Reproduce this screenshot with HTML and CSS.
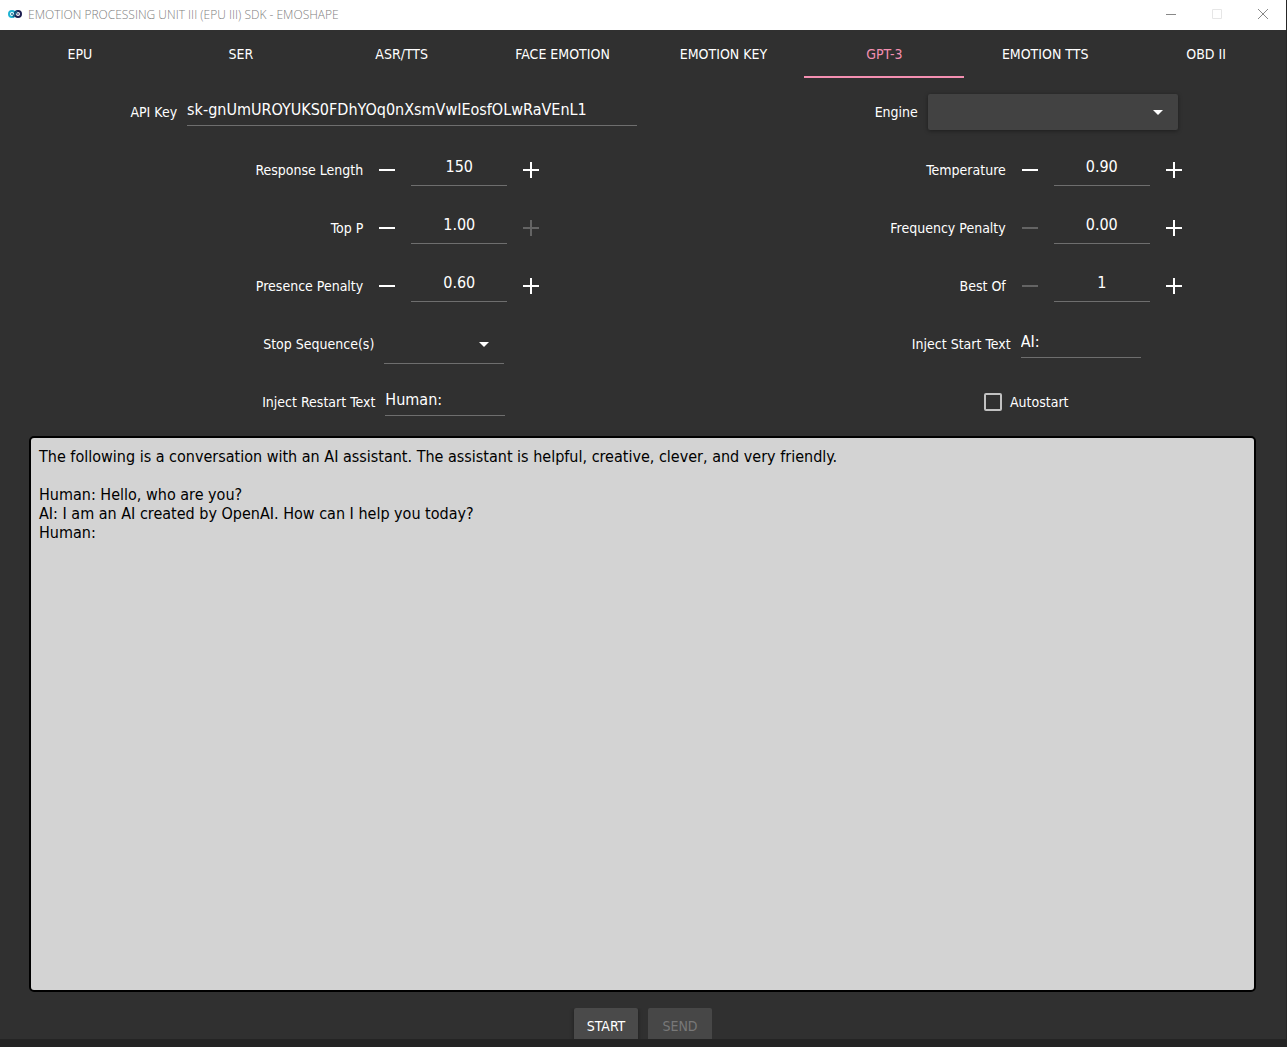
FILE: index.html
```html
<!DOCTYPE html>
<html lang="en">
<head>
    <meta charset="UTF-8">
    <meta name="viewport" content="width=device-width, initial-scale=1.0">
    <title>EMOTION PROCESSING UNIT III (EPU III) SDK - EMOSHAPE</title>
    <link rel="stylesheet" href="styles.css">
</head>
<body>

    <header class="titlebar">
        <svg class="logo" width="14" height="10" viewBox="0 0 14 10" fill="none" stroke-width="2">
            <circle cx="4" cy="5" r="3" stroke="#1fb3d3"/>
            <circle cx="10" cy="5" r="3" stroke="#1d1d4f"/>
            <path d="M5 8L9 2" stroke="#1a5f86"/>
            <circle cx="4" cy="5" r="1" fill="#1d6f94"/>
            <circle cx="10" cy="5" r="1" fill="#6d6d92"/>
        </svg>
        <span class="title">EMOTION PROCESSING UNIT III (EPU III) SDK - EMOSHAPE</span>
        <div class="window-buttons">
            <button type="button" aria-label="Minimize">
                <svg width="12" height="12" viewBox="0 0 12 12" stroke="#888"><path d="M1 6.5H11"/></svg>
            </button>
            <button type="button" aria-label="Maximize" disabled>
                <svg width="12" height="12" viewBox="0 0 12 12" fill="none" stroke="#e6e6e6"><path d="M1.5 1.5H10.5V10.5H1.5Z"/></svg>
            </button>
            <button type="button" aria-label="Close">
                <svg width="12" height="12" viewBox="0 0 12 12" stroke="#888"><path d="M1 1L11 11M11 1L1 11"/></svg>
            </button>
        </div>
    </header>

    <nav class="tabs">
        <a href="#epu">EPU</a>
        <a href="#ser">SER</a>
        <a href="#asr">ASR/TTS</a>
        <a href="#face">FACE EMOTION</a>
        <a href="#key">EMOTION KEY</a>
        <a href="#gpt" class="active">GPT-3</a>
        <a href="#tts">EMOTION TTS</a>
        <a href="#obd">OBD II</a>
    </nav>

    <form class="panel">
        <div class="settings">
            <div class="row">
                <label for="apiKey">API Key</label>
                <input type="text" class="field wide" id="apiKey" value="sk-gnUmUROYUKS0FDhYOq0nXsmVwIEosfOLwRaVEnL1">
            </div>
            <div class="row">
                <label for="engine">Engine</label>
                <div class="select filled">
                    <select id="engine"><option></option></select>
                </div>
            </div>

            <div class="row spin">
                <label for="length">Response Length</label>
                <button type="button" class="minus" aria-label="Decrease"></button>
                <input type="text" class="field" id="length" value="150">
                <button type="button" class="plus" aria-label="Increase"></button>
            </div>
            <div class="row spin">
                <label for="temperature">Temperature</label>
                <button type="button" class="minus" aria-label="Decrease"></button>
                <input type="text" class="field" id="temperature" value="0.90">
                <button type="button" class="plus" aria-label="Increase"></button>
            </div>

            <div class="row spin">
                <label for="topP">Top P</label>
                <button type="button" class="minus" aria-label="Decrease"></button>
                <input type="text" class="field" id="topP" value="1.00">
                <button type="button" class="plus" aria-label="Increase" disabled></button>
            </div>
            <div class="row spin">
                <label for="frequency">Frequency Penalty</label>
                <button type="button" class="minus" aria-label="Decrease" disabled></button>
                <input type="text" class="field" id="frequency" value="0.00">
                <button type="button" class="plus" aria-label="Increase"></button>
            </div>

            <div class="row spin">
                <label for="presence">Presence Penalty</label>
                <button type="button" class="minus" aria-label="Decrease"></button>
                <input type="text" class="field" id="presence" value="0.60">
                <button type="button" class="plus" aria-label="Increase"></button>
            </div>
            <div class="row spin">
                <label for="bestOf">Best Of</label>
                <button type="button" class="minus" aria-label="Decrease" disabled></button>
                <input type="text" class="field" id="bestOf" value="1">
                <button type="button" class="plus" aria-label="Increase"></button>
            </div>

            <div class="row">
                <label for="stop">Stop Sequence(s)</label>
                <div class="select">
                    <select id="stop"><option></option></select>
                </div>
            </div>
            <div class="row">
                <label for="startText">Inject Start Text</label>
                <input type="text" class="field" id="startText" value="AI:">
            </div>

            <div class="row">
                <label for="restartText">Inject Restart Text</label>
                <input type="text" class="field" id="restartText" value="Human:">
            </div>
            <div class="row check">
                <input type="checkbox" id="autostart">
                <label for="autostart">Autostart</label>
            </div>
        </div>

        <textarea class="prompt" aria-label="Prompt">The following is a conversation with an AI assistant. The assistant is helpful, creative, clever, and very friendly.

Human: Hello, who are you?
AI: I am an AI created by OpenAI. How can I help you today?
Human:</textarea>

        <div class="actions">
            <button type="button">START</button>
            <button type="button" disabled>SEND</button>
        </div>
    </form>

    <div class="bottom-edge"></div>

</body>
</html>
```

FILE: styles.css
```css
* {
    box-sizing: border-box;
}
body {
    display: flex;
    flex-direction: column;
    height: 100vh;
    margin: 0;
    border-right: 1px solid #262626;
    background-color: #303030;
    color: #fff;
    font-family: "DejaVu Sans Condensed", "Noto Sans", sans-serif;
    font-size: 14px;
}
button, input, select, textarea {
    font: inherit;
    color: inherit;
}
button {
    padding: 0;
    border: none;
    background: none;
}

/* Title bar */
.titlebar {
    display: flex;
    align-items: center;
    height: 30px;
    padding: 0 0 2px 8px;
    background-color: #fff;
    color: #808080;
    font-family: "Open Sans", sans-serif;
    font-size: 12px;
    font-weight: 300;
}
.title {
    margin-left: 6px;
}
.window-buttons {
    display: flex;
    margin-left: auto;
}
.window-buttons button {
    display: flex;
    align-items: center;
    justify-content: center;
    width: 46px;
    height: 28px;
}

/* Tabs */
.tabs {
    display: grid;
    grid-template-columns: repeat(8, 1fr);
    gap: 1px;
    height: 48px;
}
.tabs a {
    display: flex;
    align-items: center;
    justify-content: center;
    padding-top: 2px;
    border-bottom: 2px solid transparent;
    color: #fff;
    text-decoration: none;
}
.tabs .active {
    color: #f48fb1;
    border-color: #f48fb1;
}

/* Settings */
.panel {
    display: flex;
    flex: 1;
    flex-direction: column;
    min-height: 0;
    padding-top: 5px;
}
.settings {
    display: grid;
    grid-template-columns: 1fr 1fr;
    column-gap: 123px;
    padding-left: 124px;
}
.row {
    display: flex;
    align-items: center;
    justify-content: center;
    gap: 10px;
    height: 58px;
}
.field {
    width: 120px;
    height: 28px;
    padding: 0 0 5px;
    border: none;
    border-bottom: 1px solid #6e6e6e;
    background: none;
    font-size: 16px;
}
.field.wide {
    width: 450px;
}
.spin {
    gap: 0;
}
.spin label {
    width: 151px;
    text-align: right;
}
.spin .field {
    width: 96px;
    height: 32px;
    padding-bottom: 7px;
    text-align: center;
}
.minus, .plus {
    width: 48px;
    height: 48px;
    background: linear-gradient(#fff, #fff) center / 16px 2px no-repeat;
}
.plus {
    background: linear-gradient(#fff, #fff) center / 16px 2px no-repeat,
        linear-gradient(#fff, #fff) center / 2px 16px no-repeat;
}
.minus:disabled, .plus:disabled {
    opacity: 0.25;
}
.select {
    position: relative;
    width: 120px;
    height: 40px;
    border-bottom: 1px solid #6e6e6e;
}
.select select {
    width: 100%;
    height: 100%;
    border: none;
    background: none;
    appearance: none;
}
.select::after {
    content: "";
    position: absolute;
    top: 18px;
    right: 15px;
    border: 5px solid transparent;
    border-top-color: #fff;
    border-bottom: none;
    pointer-events: none;
}
.select.filled {
    width: 250px;
    height: 36px;
    border: none;
    border-radius: 2px;
    background-color: #424242;
    box-shadow: 0 1px 4px rgba(0,0,0,0.4);
}
.select.filled::after {
    top: 16px;
}
.check {
    gap: 8px;
}
.check input {
    width: 18px;
    height: 18px;
    margin: 0;
    border: 2px solid #c1c1c1;
    border-radius: 2px;
    appearance: none;
}
.check input:checked {
    background-color: #f48fb1;
}

/* Prompt */
.prompt {
    flex: 1;
    margin: 5px 30px 16px 29px;
    padding: 9px 8px;
    border: 2px solid #000;
    border-radius: 5px;
    background-color: #d3d3d3;
    color: #000;
    font-size: 16px;
    line-height: 19px;
    resize: none;
}
.actions {
    display: flex;
    justify-content: center;
    gap: 10px;
    height: 31px;
    overflow: hidden;
}
.actions button {
    width: 64px;
    height: 36px;
    border-radius: 2px;
    background-color: #4a4a4a;
    box-shadow: 0 1px 4px rgba(0,0,0,0.4);
}
.actions button:disabled {
    background-color: #474747;
    box-shadow: none;
    color: #787878;
}
.bottom-edge {
    height: 8px;
    background-color: #242424;
}
```
